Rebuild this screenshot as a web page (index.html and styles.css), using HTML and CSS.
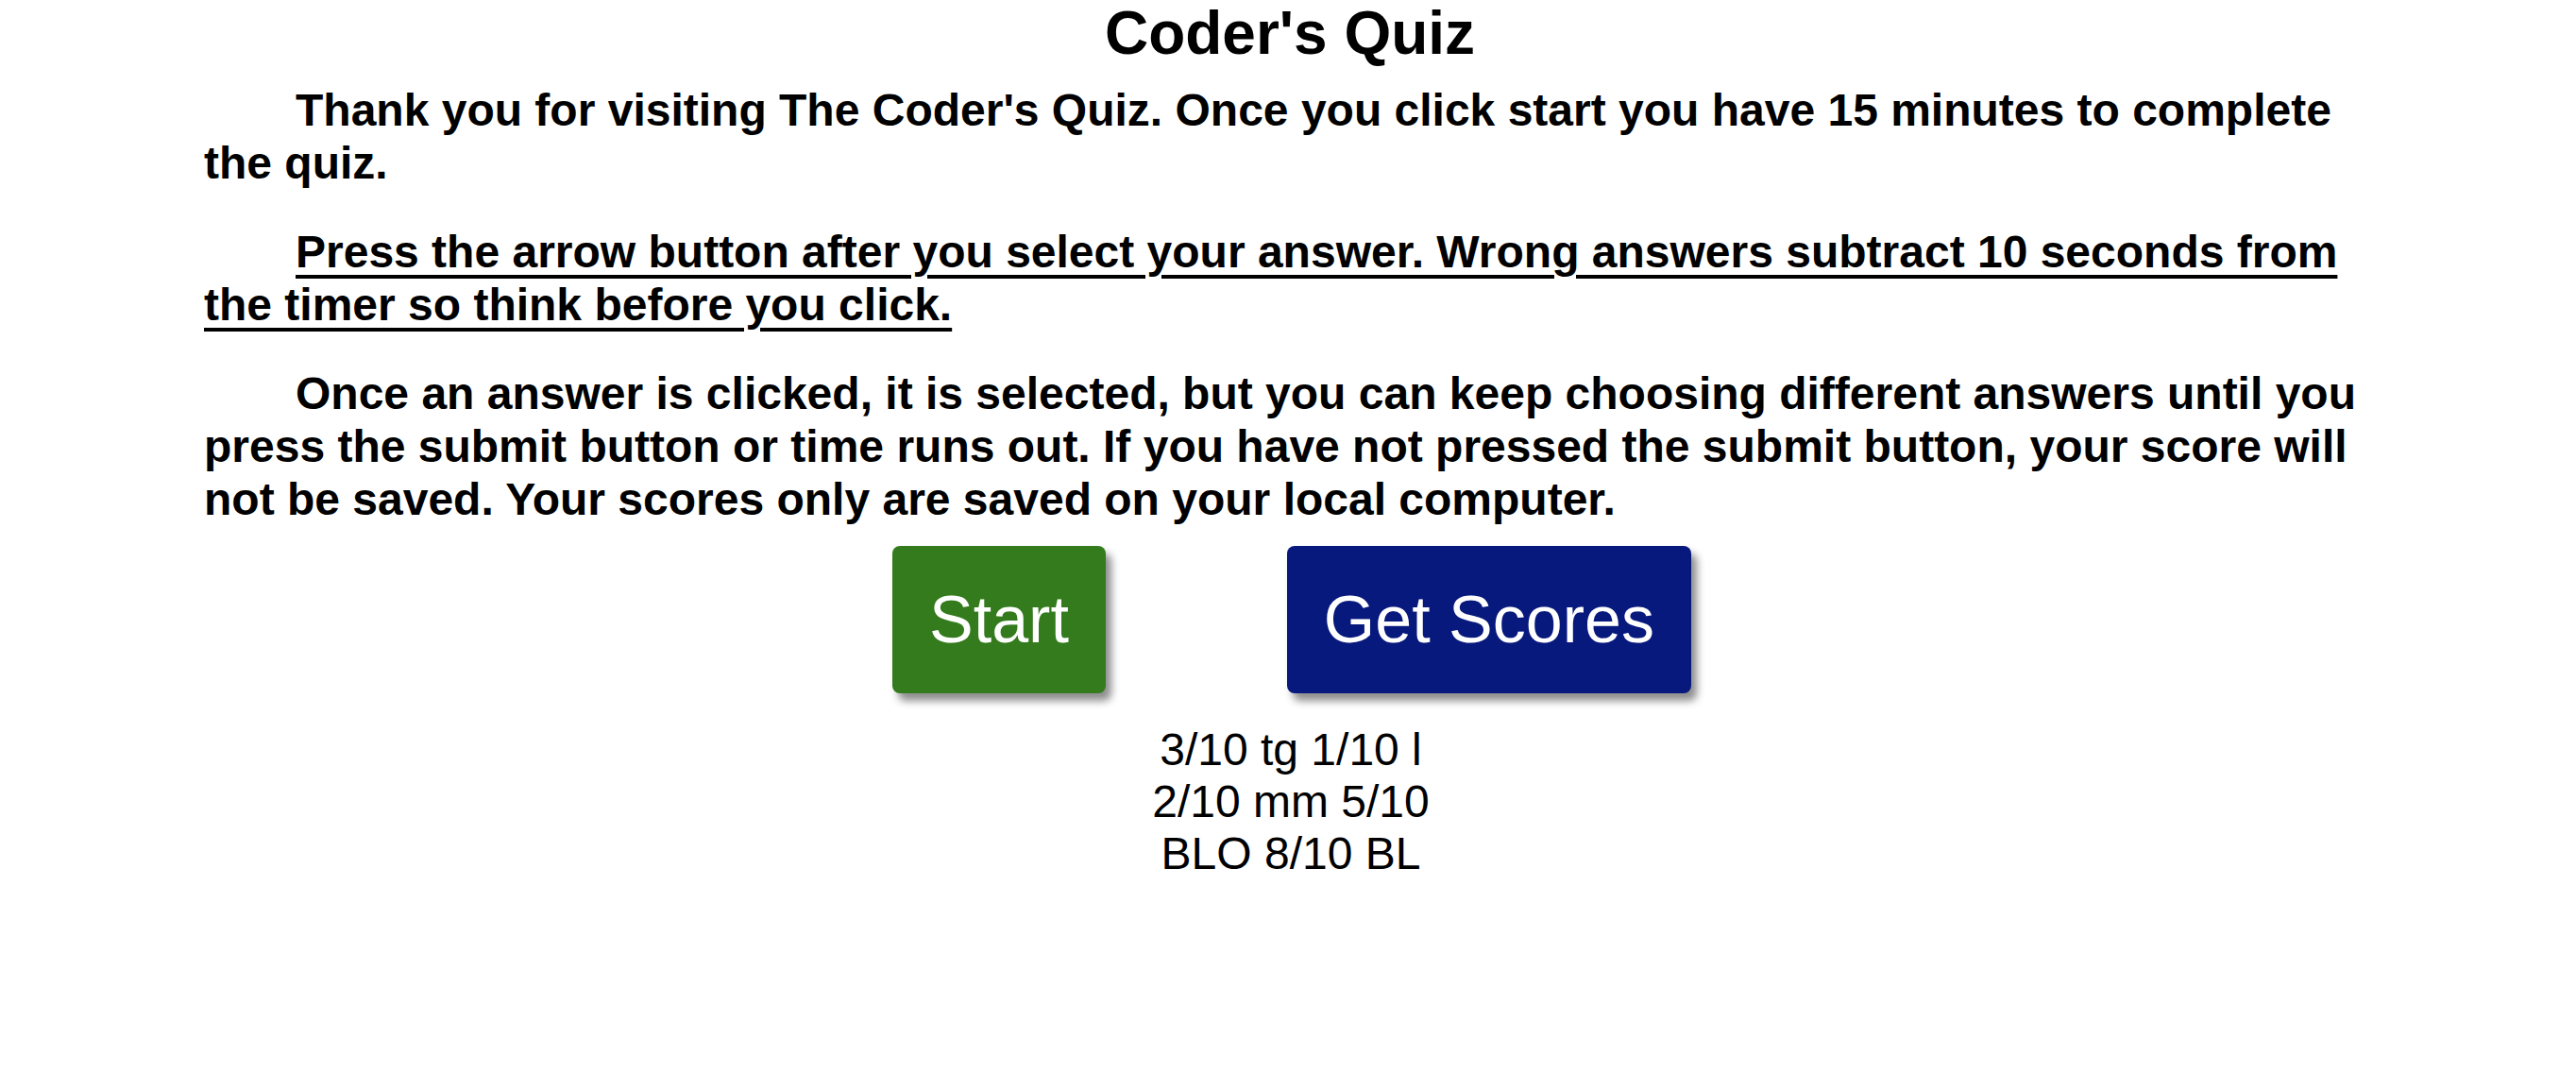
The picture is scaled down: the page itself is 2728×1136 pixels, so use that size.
FILE: index.html
```html
<!DOCTYPE html>
<html lang="en">
<head>
<meta charset="utf-8">
<title>Coder's Quiz</title>
<link rel="stylesheet" href="styles.css">
</head>
<body>
<header class="title-bar">
  <h1 class="title">Coder's Quiz</h1>
</header>
<main class="intro">
  <p class="intro-text">Thank you for visiting The Coder's Quiz. Once you click start you have 15 minutes to complete the quiz.</p>
  <p class="intro-text intro-text--warn">Press the arrow button after you select your answer. Wrong answers subtract 10 seconds from the timer so think before you click.</p>
  <p class="intro-text">Once an answer is clicked, it is selected, but you can keep choosing different answers until you press the submit button or time runs out. If you have not pressed the submit button, your score will not be saved. Your scores only are saved on your local computer.</p>
</main>
<div class="actions">
  <button class="btn btn--start" type="button">Start</button>
  <button class="btn btn--scores" type="button">Get Scores</button>
</div>
<section class="scores">
  <div class="score-line">3/10 tg 1/10 l</div>
  <div class="score-line">2/10 mm 5/10</div>
  <div class="score-line">BLO 8/10 BL</div>
</section>
</body>
</html>
```
FILE: styles.css
```css
html, body {
  margin: 0;
  padding: 0;
  background: #ffffff;
  color: #000000;
  font-family: "Liberation Sans", Arial, Helvetica, sans-serif;
}

.title-bar {
  display: block;
  padding-left: 4px;
}

.title {
  margin: 0;
  font-size: 64px;
  line-height: 70px;
  font-weight: bold;
  text-align: center;
}

.intro {
  padding: 0 216px;
  margin-top: 19px;
}

.intro-text {
  margin: 0 0 38px 0;
  font-size: 48px;
  line-height: 56px;
  font-weight: bold;
  text-indent: 97px;
}

.intro-text:last-child {
  margin-bottom: 0;
}

.intro-text--warn {
  text-decoration: underline;
  text-decoration-thickness: 4px;
  text-underline-offset: 8px;
}

.actions {
  display: flex;
  justify-content: center;
  gap: 192px;
  padding-left: 8px;
  margin-top: 21px;
}

.btn {
  border: none;
  border-radius: 8px;
  padding: 38px 39px;
  font-family: "Liberation Sans", Arial, Helvetica, sans-serif;
  font-size: 70px;
  line-height: 80px;
  color: #ffffff;
  box-shadow: 6px 8px 8px rgba(0, 0, 0, 0.45);
  cursor: pointer;
}

.btn--start {
  background: #337b1c;
}

.btn--scores {
  background: #08197d;
}

.scores {
  margin-top: 32px;
  padding-left: 6px;
  text-align: center;
  font-size: 48px;
  line-height: 55px;
}
```
